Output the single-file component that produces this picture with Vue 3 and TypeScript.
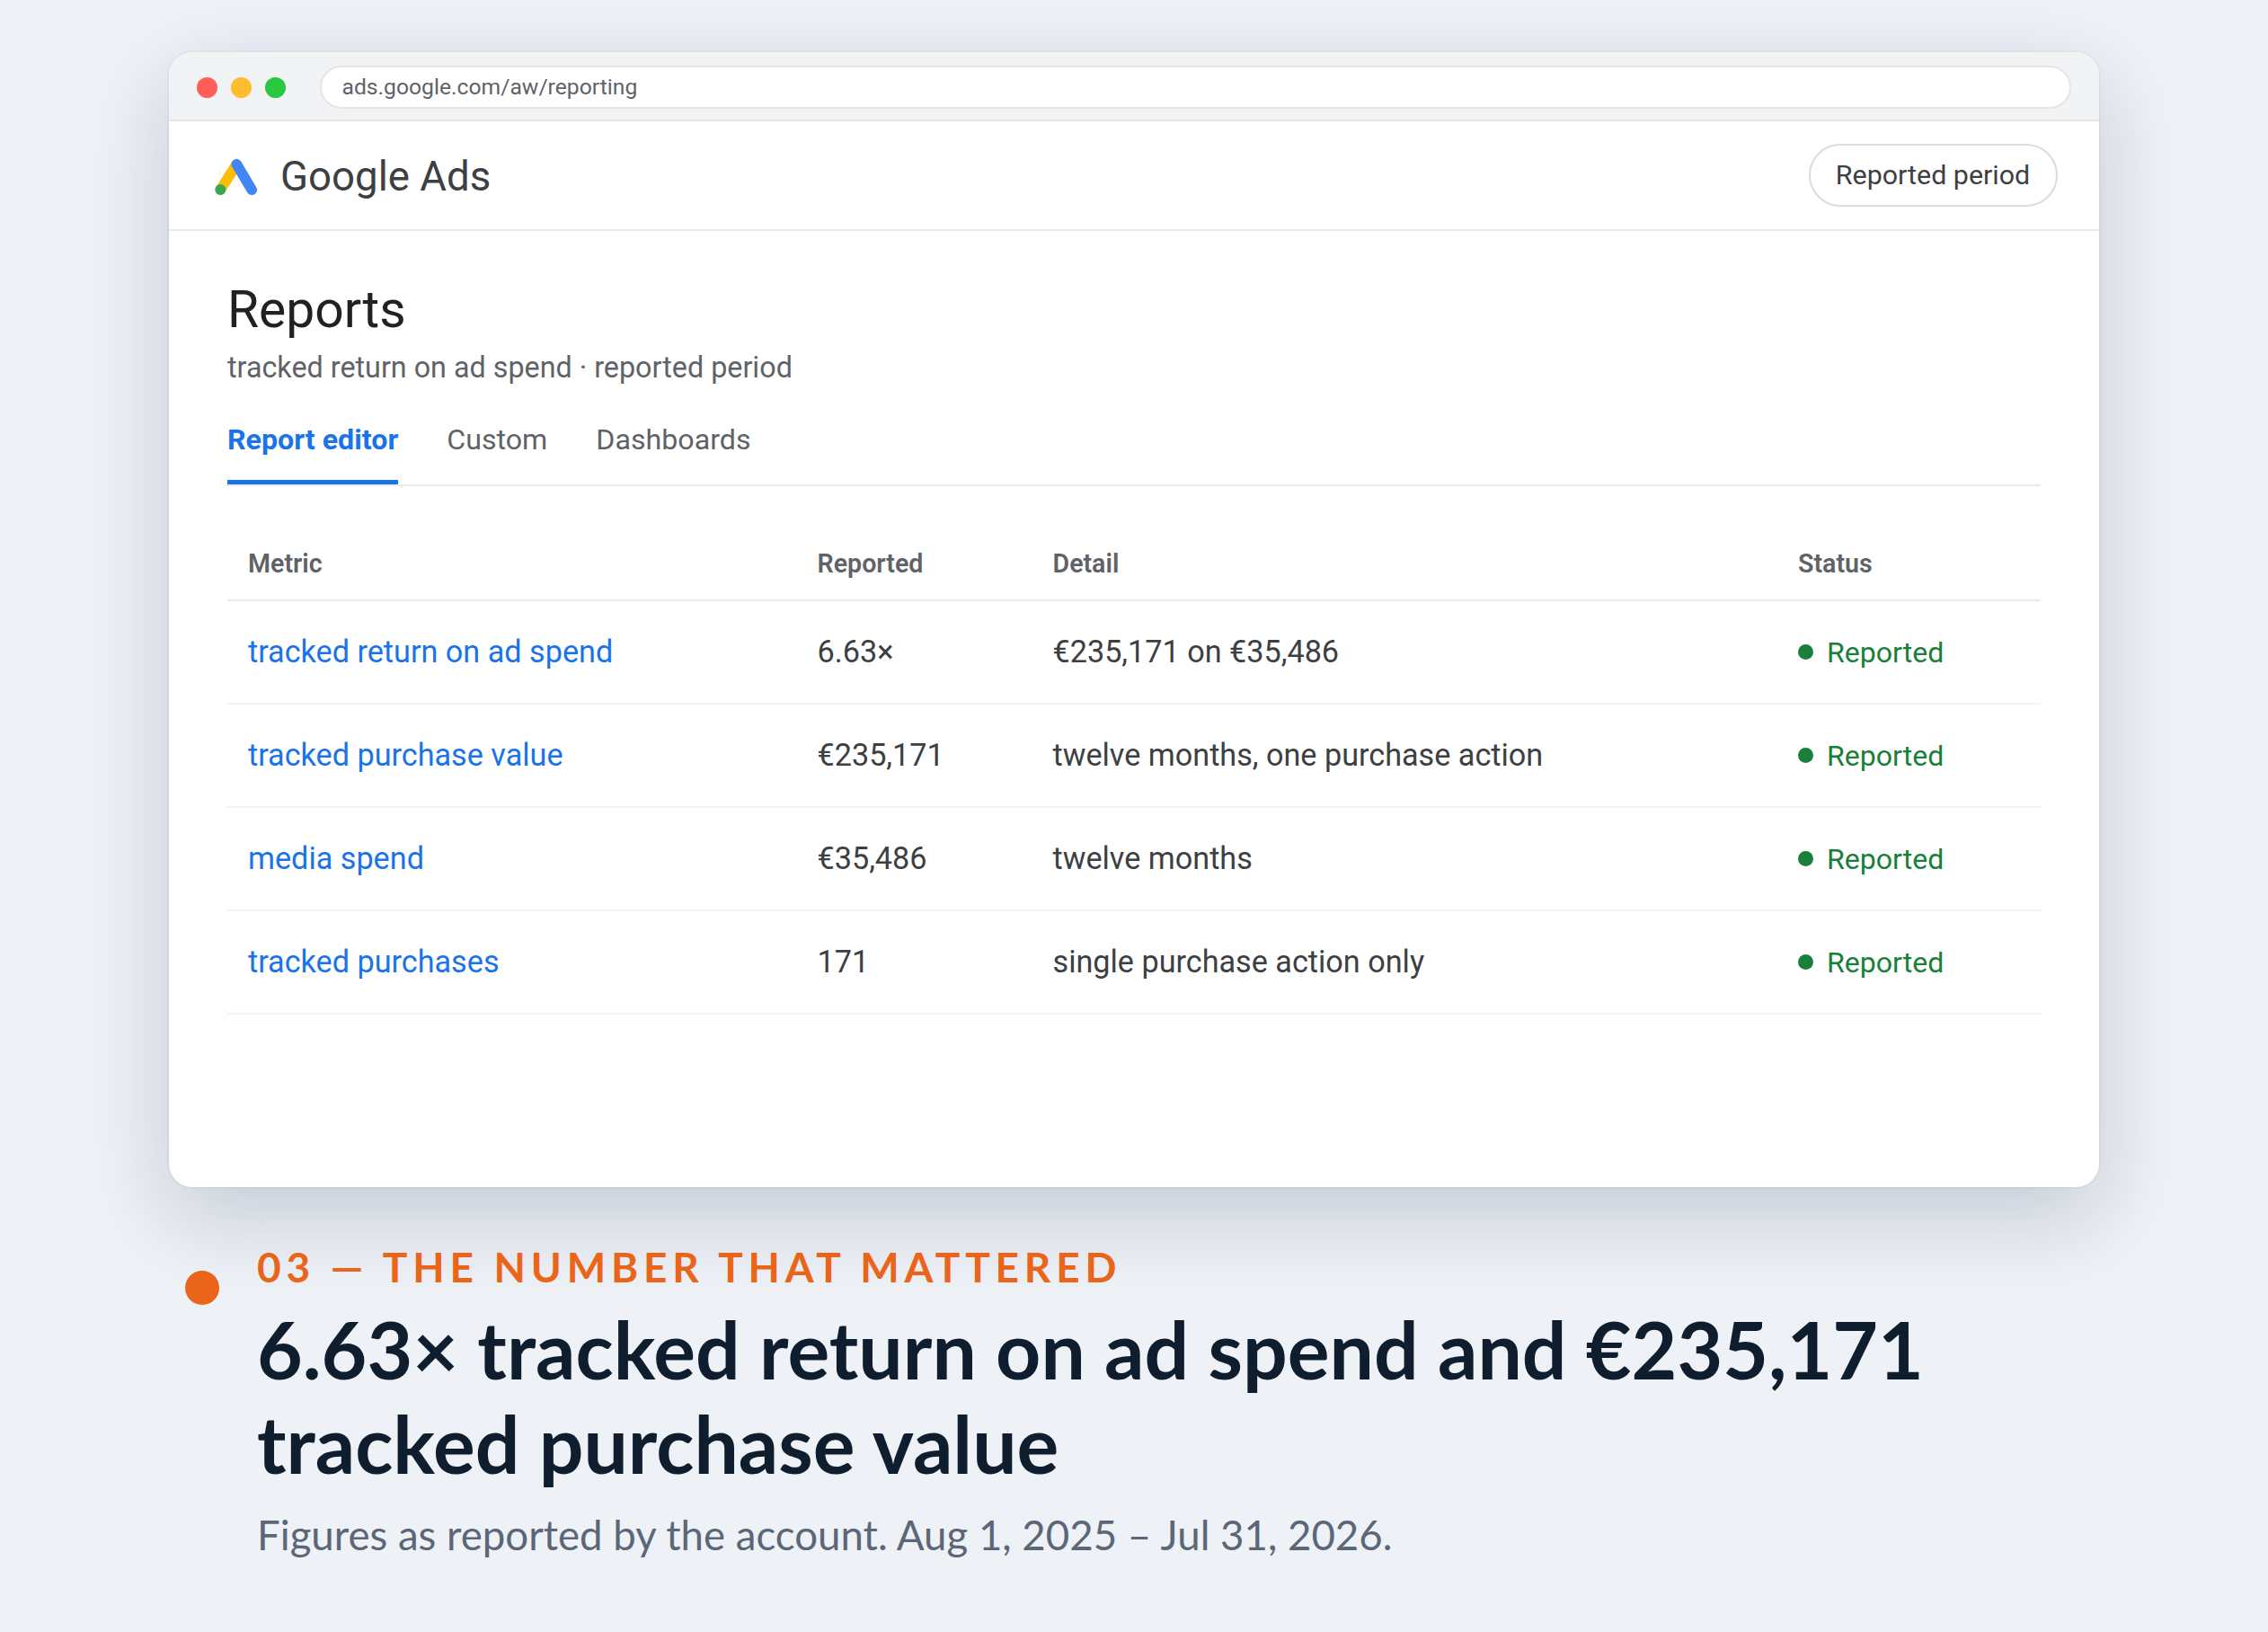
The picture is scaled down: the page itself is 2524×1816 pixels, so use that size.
<script setup lang="ts">
interface Row { metric: string; value: string; detail: string }
const rows: Row[] = [
  { metric: 'tracked return on ad spend', value: '6.63×', detail: '€235,171 on €35,486' },
  { metric: 'tracked purchase value', value: '€235,171', detail: 'twelve months, one purchase action' },
  { metric: 'media spend', value: '€35,486', detail: 'twelve months' },
  { metric: 'tracked purchases', value: '171', detail: 'single purchase action only' },
]
const tabs = ['Custom', 'Dashboards']
</script>

<template>
  <div class="page">
    <section class="window">
      <div class="chrome">
        <div class="lights">
          <span class="light red"></span>
          <span class="light amber"></span>
          <span class="light green"></span>
        </div>
        <div class="address">ads.google.com/aw/reporting</div>
      </div>
      <header class="topbar">
        <div class="brand">
          <svg class="logo" width="47" height="40" viewBox="0 0 47 40" aria-hidden="true">
            <line x1="24.3" y1="5.8" x2="6.3" y2="34" stroke="#fbbc04" stroke-width="11.6" stroke-linecap="round" />
            <line x1="24.3" y1="5.8" x2="41.2" y2="34.2" stroke="#4285f4" stroke-width="11.6" stroke-linecap="round" />
            <circle cx="6.3" cy="34" r="6" fill="#34a853" />
          </svg>
          <span class="brand-name">Google Ads</span>
        </div>
        <button class="period">Reported period</button>
      </header>
      <main class="body">
        <h1 class="title">Reports</h1>
        <p class="subtitle">tracked return on ad spend · reported period</p>
        <nav class="tabs">
          <span class="tab active">Report editor</span>
          <span v-for="t in tabs" :key="t" class="tab">{{ t }}</span>
        </nav>
        <div class="table">
          <div class="row head">
            <span>Metric</span><span>Reported</span><span>Detail</span><span>Status</span>
          </div>
          <div v-for="r in rows" :key="r.metric" class="row">
            <span class="metric">{{ r.metric }}</span>
            <span>{{ r.value }}</span>
            <span>{{ r.detail }}</span>
            <span class="status"><i class="status-dot"></i>Reported</span>
          </div>
        </div>
      </main>
    </section>
    <section class="caption">
      <span class="marker"></span>
      <div class="caption-text">
        <div class="eyebrow">03 — THE NUMBER THAT MATTERED</div>
        <h2 class="headline">6.63× tracked return on ad spend and €235,171 tracked purchase value</h2>
        <p class="note">Figures as reported by the account. Aug 1, 2025 – Jul 31, 2026.</p>
      </div>
    </section>
  </div>
</template>

<style>
html, body { margin: 0; background: #eef1f6; }
</style>

<style scoped>
.page {
  width: 2524px;
  height: 1816px;
  box-sizing: border-box;
  padding: 58px 188px 0;
  background: #eef1f6;
  overflow: hidden;
  font-family: Roboto, sans-serif;
}
.window {
  height: 1263px;
  box-sizing: border-box;
  background: #fff;
  border-radius: 26px;
  overflow: hidden;
  box-shadow: 0 0 0 1.6px rgba(20, 30, 50, 0.04), 0 32px 96px rgba(20, 35, 70, 0.19);
  display: flex;
  flex-direction: column;
}
.chrome {
  height: 77px;
  box-sizing: border-box;
  flex: none;
  display: flex;
  align-items: center;
  gap: 38.5px;
  padding: 3px 31.5px 0 30.5px;
  background: #f1f3f4;
  border-bottom: 2px solid #e3e5e8;
}
.lights { display: flex; gap: 15px; }
.light { width: 23px; height: 23px; border-radius: 50%; }
.red { background: #ff5f57; }
.amber { background: #febc2e; }
.green { background: #28c840; }
.address {
  flex: 1;
  height: 48px;
  box-sizing: border-box;
  padding-left: 22.5px;
  background: #fff;
  border: 2px solid #e3e5e8;
  border-radius: 24px;
  color: #5f6368;
  font-size: 24.7px;
  line-height: 44px;
}
.topbar {
  height: 122px;
  box-sizing: border-box;
  flex: none;
  display: flex;
  align-items: center;
  justify-content: space-between;
  padding: 0 46.5px 0 51px;
  border-bottom: 2px solid #e8eaed;
}
.brand { display: flex; align-items: center; gap: 26px; padding-top: 4px; }
.logo { display: block; }
.brand-name { font-size: 45.6px; color: #3c4043; line-height: 1; }
.period {
  width: 277px;
  height: 70px;
  margin-top: -1px;
  padding: 0;
  background: #fff;
  border: 2px solid #dadce0;
  border-radius: 35px;
  color: #3c4043;
  font-family: inherit;
  font-size: 30.4px;
}
.body { padding: 0 65px; }
.title {
  margin: 55px 0 0;
  font-size: 57px;
  line-height: 66px;
  font-weight: 400;
  color: #202124;
}
.subtitle {
  margin: 11px 0 0;
  font-size: 32.3px;
  line-height: 40px;
  color: #5f6368;
}
.tabs {
  display: flex;
  gap: 54px;
  margin-top: 28px;
  height: 82px;
  border-bottom: 2px solid #e8eaed;
}
.tab {
  font-size: 32.2px;
  line-height: 42px;
  padding-top: 11px;
  color: #5f6368;
}
.tab.active {
  font-weight: 700;
  color: #1a73e8;
  border-bottom: 5px solid #1a73e8;
  box-sizing: border-box;
  height: 82px;
}
.table { margin-top: 34px; }
.row {
  display: grid;
  grid-template-columns: 633px 262px 829px 294px;
  height: 115px;
  box-sizing: border-box;
  align-items: center;
  padding-bottom: 2px;
  border-bottom: 2px solid #f1f3f4;
  font-size: 34.2px;
  color: #3c4043;
}
.row > span { padding-left: 23.5px; }
.row > span:first-child { padding-left: 23px; }
.row > span:last-child { padding-left: 24px; }
.row.head {
  height: 94px;
  padding: 12px 0 0;
  border-bottom-color: #e8eaed;
  font-size: 28.6px;
  font-weight: 600;
  color: #5f6368;
}
.metric { color: #1a73e8; }
.status {
  display: flex;
  align-items: center;
  gap: 15px;
  padding-top: 2px;
  font-size: 32.1px;
  color: #188038;
}
.status-dot { width: 17px; height: 17px; border-radius: 50%; background: #188038; }
.caption {
  display: flex;
  align-items: flex-start;
  gap: 42px;
  margin-top: 60.5px;
  padding-left: 18px;
  font-family: Lato, sans-serif;
}
.marker {
  flex: none;
  width: 38px;
  height: 38px;
  margin-top: 32px;
  border-radius: 50%;
  background: #ea6519;
}
.eyebrow {
  font-size: 46px;
  font-weight: 700;
  line-height: 56px;
  letter-spacing: 5.77px;
  color: #ea6519;
}
.headline {
  margin: 11.5px 0 0;
  font-size: 87.6px;
  line-height: 105px;
  font-weight: 700;
  color: #0f1e2e;
}
.note {
  margin: 21px 0 0;
  font-size: 45.6px;
  line-height: 56px;
  color: #5b6779;
}
</style>
